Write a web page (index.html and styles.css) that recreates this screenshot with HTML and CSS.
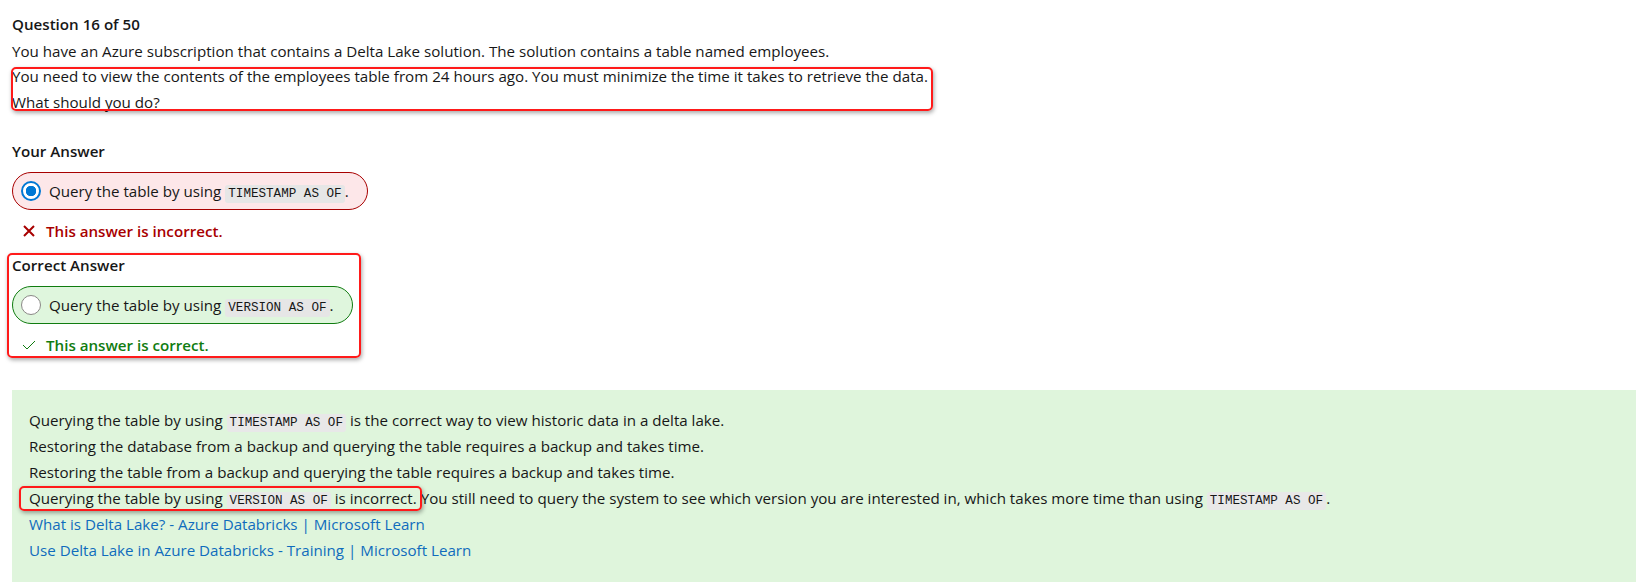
FILE: index.html
```html
<!DOCTYPE html>
<html lang="en">
<head>
<meta charset="utf-8">
<title>Question 16 of 50</title>
<link rel="stylesheet" href="styles.css">
</head>
<body>
<main class="page">
  <section class="question">
    <h2 class="q-title">Question 16 of 50</h2>
    <p class="line">You have an Azure subscription that contains a Delta Lake solution. The solution contains a table named employees.</p>
    <div class="mark mark-q">
      <p class="line">You need to view the contents of the employees table from 24 hours ago. You must minimize the time it takes to retrieve the data.</p>
      <p class="line">What should you do?</p>
    </div>
  </section>

  <section class="answer answer-yours">
    <h3 class="label">Your Answer</h3>
    <div class="choice choice-wrong">
      <span class="radio radio-on"></span>
      <span class="choice-text">Query the table by using <code>TIMESTAMP AS OF</code>.</span>
    </div>
    <p class="verdict verdict-wrong">
      <svg class="v-icon" width="14" height="14" viewBox="0 0 14 14" aria-hidden="true"><path d="M2 2 L12 12 M12 2 L2 12" stroke="#a80000" stroke-width="2" fill="none"/></svg>
      <span>This answer is incorrect.</span>
    </p>
  </section>

  <section class="answer answer-correct mark mark-c">
    <h3 class="label">Correct Answer</h3>
    <div class="choice choice-right">
      <span class="radio"></span>
      <span class="choice-text">Query the table by using <code>VERSION AS OF</code>.</span>
    </div>
    <p class="verdict verdict-right">
      <svg class="v-icon" width="14" height="10" viewBox="0 0 14 10" aria-hidden="true"><path d="M1 5 L5 9 L13 1" stroke="#107c10" stroke-width="1" fill="none"/></svg>
      <span>This answer is correct.</span>
    </p>
  </section>

  <section class="explain">
    <p class="line">Querying the table by using <code>TIMESTAMP AS OF</code> is the correct way to view historic data in a delta lake.</p>
    <p class="line">Restoring the database from a backup and querying the table requires a backup and takes time.</p>
    <p class="line">Restoring the table from a backup and querying the table requires a backup and takes time.</p>
    <p class="line"><span class="mark mark-e">Querying the table by using <code>VERSION AS OF</code> is incorrect.</span> You still need to query the system to see which version you are interested in, which takes more time than using <code>TIMESTAMP AS OF</code>.</p>
    <p class="line"><a class="link" href="#">What is Delta Lake? - Azure Databricks | Microsoft Learn</a></p>
    <p class="line"><a class="link" href="#">Use Delta Lake in Azure Databricks - Training | Microsoft Learn</a></p>
  </section>
</main>
</body>
</html>
```

FILE: styles.css
```css
* { box-sizing: border-box; }

html, body {
  margin: 0;
  background: #ffffff;
}

body {
  font-family: "Open Sans", "Noto Sans", sans-serif;
  font-size: 15.15px;
  color: #171717;
  overflow: hidden;
}

.page {
  padding: 11px 3px 0 12px;
}

.q-title,
.label {
  margin: 0;
  font-size: 15.15px;
  font-weight: 600;
  line-height: 26px;
}

.q-title {
  margin-bottom: 1.5px;
}

.line {
  margin: 0;
  height: 25.5px;
  line-height: 25.5px;
}

.explain .line {
  height: 26px;
  line-height: 26px;
}

/* annotation rectangles drawn over content */
.mark {
  position: relative;
}

.mark::after {
  content: "";
  position: absolute;
  border: 2px solid #ff1a1a;
  border-radius: 5px;
  box-shadow: 1px 2px 4px rgba(0, 0, 0, 0.35);
  pointer-events: none;
}

.mark-q::after {
  top: 3px;
  bottom: 4px;
  left: -1px;
  width: 918px;
}

.mark-c::after {
  top: 1px;
  bottom: 0;
  left: -5px;
  width: 350px;
}

.mark-e {
  display: inline-block;
  height: 26px;
  line-height: 26px;
  vertical-align: top;
}

.mark-e::after {
  top: 1px;
  bottom: 0;
  left: -10px;
  right: -5px;
}

/* answers */
.answer-yours {
  margin-top: 23px;
}

.answer-correct {
  margin-top: 8px;
}

.choice {
  display: inline-flex;
  align-items: center;
  gap: 8px;
  height: 38px;
  margin-top: 8px;
  padding: 0 18px 0 8px;
  border-radius: 19px;
  border: 1px solid;
  line-height: 20px;
  white-space: nowrap;
  vertical-align: top;
}

.choice-wrong {
  background: #fde7e9;
  border-color: #a80000;
}

.choice-right {
  background: #dff6dd;
  border-color: #107c10;
}

.radio {
  flex: none;
  width: 20px;
  height: 20px;
  border-radius: 50%;
  border: 1px solid #8a8886;
  background: #ffffff;
}

.radio-on {
  border: 2px solid #0078d4;
  background: radial-gradient(circle, #0078d4 0 5px, #ffffff 5.5px);
}

code {
  font-family: "Liberation Mono", "DejaVu Sans Mono", monospace;
  font-size: 12.6px;
  line-height: 1;
  background: #e6e6e6;
  padding: 2px 3px;
  border-radius: 3px;
}

.explain code {
  background: #e8e8e8;
}

.verdict {
  display: flex;
  align-items: center;
  gap: 10px;
  margin: 8px 0 0;
  padding-left: 10px;
  line-height: 26px;
  font-weight: 600;
}

.verdict-wrong { color: #a80000; }
.verdict-right { color: #107c10; }

.v-icon {
  flex: none;
}

/* explanation panel */
.explain {
  margin-top: 32px;
  padding: 17px 16px 40px 17px;
  background: #dff5dc;
}

.link {
  color: #0f6cbd;
  text-decoration: none;
}
```
